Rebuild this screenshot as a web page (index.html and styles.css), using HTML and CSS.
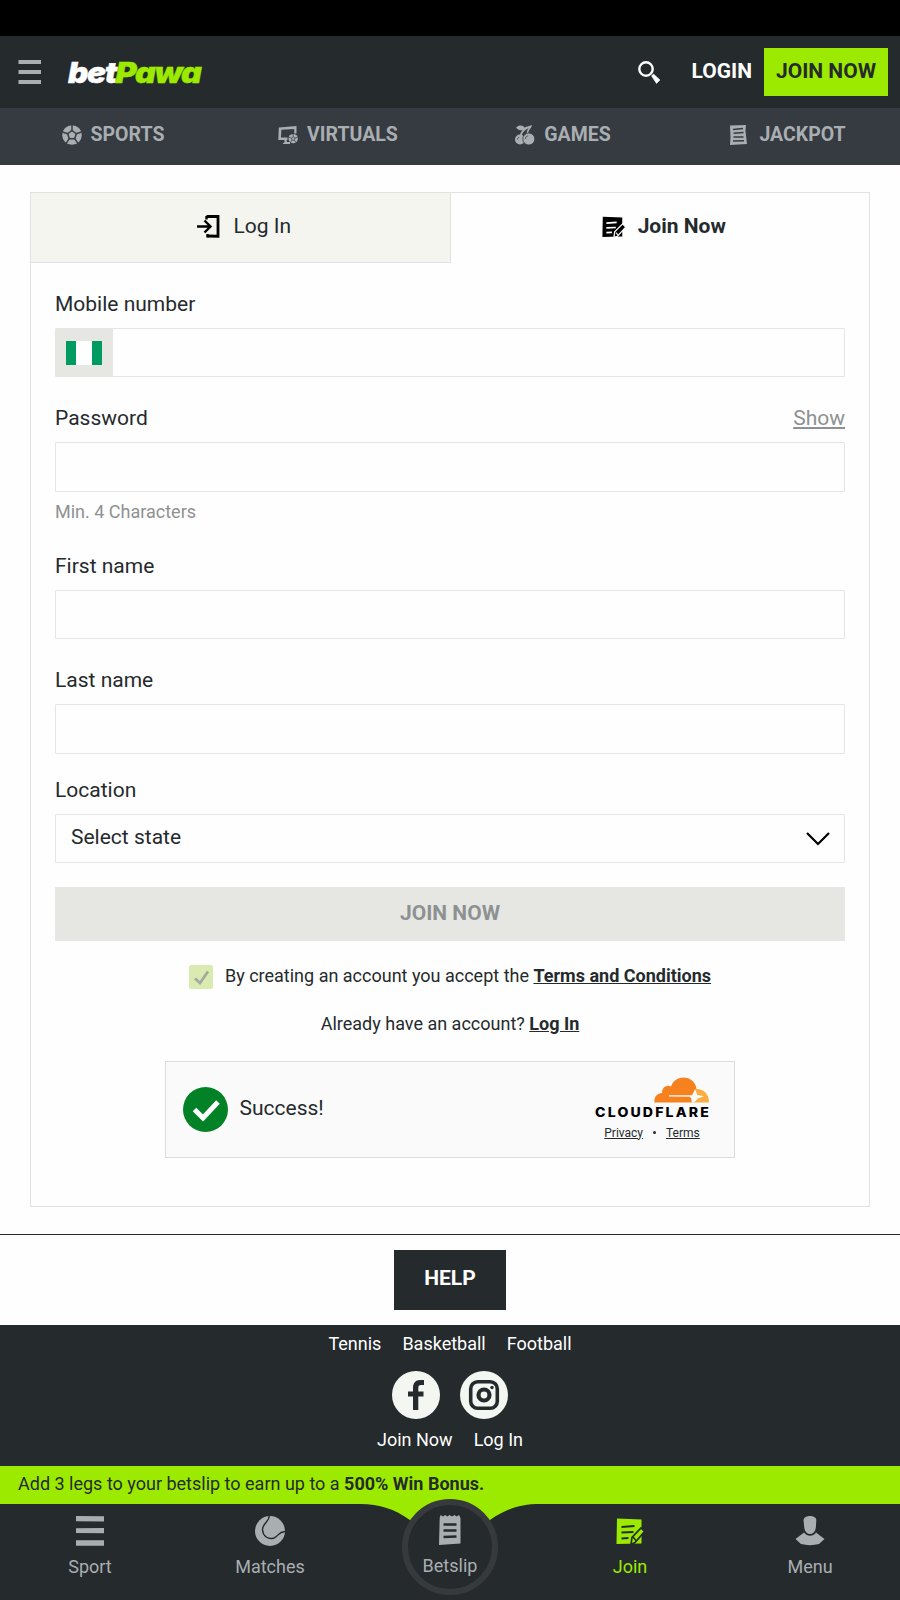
FILE: index.html
```html
<!DOCTYPE html>
<html lang="en">

<head>
	<meta charset="UTF-8">
	<title>betPawa - Join Now</title>
	<link rel="stylesheet" href="styles.css">
</head>

<body>

	<div class="statusBar"></div>

	<header class="header">
		<svg class="hamburger" width="24" height="26" viewBox="0 0 24 26">
			<path d="M.5 1h22.500v4H.5zM.5 11h22.500v4H.5zM.5 21h22.500v4H.5z" fill="#a9aeb1" />
		</svg>
		<svg class="logo" width="140" height="34" viewBox="0 0 140 34">
			<text x="1" y="27.500" textLength="48" lengthAdjust="spacingAndGlyphs" fill="#fff" stroke="#fff">bet</text>
			<text x="48.500" y="27.500" textLength="85" lengthAdjust="spacingAndGlyphs" fill="#9cea00" stroke="#9cea00">Pawa</text>
		</svg>
		<svg class="search" width="24" height="24" viewBox="0 0 24 24">
			<circle cx="9" cy="9" r="6.700" fill="none" stroke="#fff" stroke-width="2.400" />
			<path d="M14.500 16l2-2 6.500 6-3.500 3.500z" fill="#fff" stroke="#fff" stroke-width=".5" />
		</svg>
		<a class="login">LOGIN</a>
		<a class="joinBtn">JOIN NOW</a>
	</header>

	<nav class="mainNav">
		<a>
			<svg width="20" height="20" viewBox="0 0 20 20">
				<circle cx="10" cy="10" r="9.800" fill="#a9aeb1" />
				<path d="M10 5.500l4.300 3.200-1.600 5H7.300l-1.600-5z" fill="none" stroke="#363a41" stroke-width="1.500" />
				<path d="M10 5.500V0M14.300 8.700L19.500 7M12.700 13.700l3 4.500M7.300 13.700l-3 4.500M5.700 8.700L.5 7" fill="none" stroke="#363a41" stroke-width="1.500" />
			</svg>
			<span>SPORTS</span>
		</a>
		<a>
			<svg width="20" height="20" viewBox="0 0 20 20">
				<path d="M.8 2.500L18.500 1v7.500h-2.300V4L3.400 4.800 3 12.500h6.500V15H8.500l.5 2h3v2H4.500l2-2V15H.3z" fill="#a9aeb1" />
				<circle cx="15.200" cy="13.600" r="4.700" fill="#a9aeb1" />
				<path d="M15.200 11.800l1.800 1.300-.7 2h-2.200l-.7-2zM15.200 8.800v3M17 13.100l3-1M16.300 15.100l1.800 2.600M14.100 15.100l-1.800 2.600M13.400 13.100l-3-1" fill="none" stroke="#363a41" stroke-width=".7" />
			</svg>
			<span>VIRTUALS</span>
		</a>
		<a>
			<svg width="20" height="20" viewBox="0 0 20 20">
				<path d="M1 2.500C4-.5 8 0 9.500 2.500L17 0l-.8 2.500C14 5 13 7 13.500 9.500h-1.800c-.3-2.500.5-5 2.300-6.500-3.500 1.500-6.500 4-7.500 7.500H4.700C5.300 8 6.500 6 8 4.700 5.500 6 3 5 1 2.500z" fill="#a9aeb1" />
				<circle cx="5" cy="14.500" r="5" fill="#a9aeb1" />
				<circle cx="13.800" cy="14" r="6" fill="#a9aeb1" stroke="#363a41" stroke-width=".8" />
				<path d="M10.500 14c0-2 1.200-3 2.700-3.200M2.500 14.500c0-1.300.7-2 1.600-2.300" fill="none" stroke="#363a41" stroke-width=".8" />
			</svg>
			<span>GAMES</span>
		</a>
		<a>
			<svg class="jackpotIcon" width="17" height="20" viewBox="0 0 17 20">
				<path d="M0 .5L16 0l-.5 6 1.500 13-17 1 .5-8z" fill="#a9aeb1" />
				<path d="M3 4.500l10-1M3.500 8.300l10-.8M3.500 12h10M3 16l11-.3" fill="none" stroke="#363a41" stroke-width="1.400" />
			</svg>
			<span>JACKPOT</span>
		</a>
	</nav>

	<main class="card">
		<div class="tabs">
			<div class="tab tabLogin">
				<svg width="23" height="23" viewBox="0 0 23 23">
					<path d="M9.500 1.500H21v19.700L10.500 21" fill="none" stroke="#000" stroke-width="2.800" />
					<path d="M9.500 1v3.500M10.500 19v3.500M0 11.500h13M7.500 5.500l6 6-6 6" fill="none" stroke="#000" stroke-width="2.400" />
				</svg>
				<span>Log In</span>
			</div>
			<div class="tab tabJoin">
				<svg width="23" height="23" viewBox="0 0 29 29">
					<path d="M1 1l24.500 1v24L.5 26.500z" />
					<path d="M5.500 9l13-1M5.500 15l12-.5M5.500 21l7-.5" fill="none" stroke="#fff" stroke-width="2.200" />
					<path d="M15 27l1-7L26 10l4 4-10.500 11.500z" stroke="#fff" stroke-width="1.500" />
					<path d="M17.500 21l3 3" stroke="#fff" stroke-width="1.300" />
				</svg>
				<span>Join Now</span>
			</div>
		</div>

		<form class="form">
			<div class="field">
				<label>Mobile number</label>
				<div class="input phone">
					<div class="prefix">
						<div class="flag"></div>
					</div>
				</div>
			</div>
			<div class="field">
				<label>Password <a class="show">Show</a></label>
				<div class="input tall"></div>
				<p class="hint">Min. 4 Characters</p>
			</div>
			<div class="field">
				<label>First name</label>
				<div class="input"></div>
			</div>
			<div class="field lastName">
				<label>Last name</label>
				<div class="input tall"></div>
			</div>
			<div class="field location">
				<label>Location</label>
				<div class="input select">
					<span>Select state</span>
					<svg width="24" height="14" viewBox="0 0 24 14">
						<path d="M1 1l11 11L23 1" fill="none" stroke="#000" stroke-width="2.200" />
					</svg>
				</div>
			</div>
			<div class="submit">JOIN NOW</div>
			<div class="terms">
				<div class="checkbox">
					<svg width="24" height="24" viewBox="0 0 24 24">
						<path d="M6 13.500l5 4.500 8-11.500" fill="none" stroke="#a3aa9f" stroke-width="2.800" />
					</svg>
				</div>
				<p>By creating an account you accept the <a>Terms and Conditions</a></p>
			</div>
			<p class="already">Already have an account? <a>Log In</a></p>

			<div class="captcha">
				<svg class="success" width="45" height="45" viewBox="0 0 45 45">
					<circle cx="22.500" cy="22.500" r="22.500" fill="#038127" />
					<path d="M11.500 22.500l8.500 8.500L35 15" fill="none" stroke="#fff" stroke-width="5" />
				</svg>
				<span class="successText">Success!</span>
				<div class="cloudflare">
					<svg width="116" height="42" viewBox="0 0 116 42">
						<path d="M60.500 25.500c-.8-5 2.200-9.300 7.600-9.500-.5-5 4.400-8.700 9-6.500C81-2.300 98-2.500 102 9.500l1 8-4 8z" fill="#f6821f" />
						<path d="M102 12c7-.5 13 4.500 13 13.500H98z" fill="#fbad41" />
						<path d="M75 18.300h23l3.200-6.300 2 6 7 1.200-6 2-4 4.300h-2.700v-3.500l-1.500-2.200-21-.3z" fill="#fafafa" />
						<text x="1" y="39.500" textLength="116" lengthAdjust="spacingAndGlyphs">CLOUDFLARE</text>
					</svg>
					<div class="legal"><a>Privacy</a><i></i><a>Terms</a></div>
				</div>
			</div>
		</form>
	</main>

	<section class="help">
		<a class="helpBtn">HELP</a>
	</section>

	<footer class="footer">
		<div class="links">
			<a>Tennis</a><a>Basketball</a><a>Football</a>
		</div>
		<div class="social">
			<svg width="48" height="48" viewBox="0 0 48 48">
				<circle cx="24" cy="24" r="24" fill="#f4f6f1" />
				<path d="M21 39V25.500h-5v-5h5V17c0-5 2.500-8 7-8h4v5h-3c-2 0-2.700 1-2.700 3v3.500h5.200v5h-5.200V39z" fill="#252a2d" />
			</svg>
			<svg width="48" height="48" viewBox="0 0 48 48">
				<circle cx="24" cy="24" r="24" fill="#f4f6f1" />
				<rect x="10.700" y="10.700" width="26.600" height="26.600" rx="7" fill="none" stroke="#252a2d" stroke-width="3.600" />
				<circle cx="24" cy="24" r="5.500" fill="none" stroke="#252a2d" stroke-width="4.200" />
				<circle cx="32" cy="16.500" r="1.700" fill="#252a2d" />
			</svg>
		</div>
		<div class="links">
			<a>Join Now</a><a>Log In</a>
		</div>
	</footer>

	<div class="bonus">Add 3 legs to your betslip to earn up to a <b>500% Win Bonus.</b></div>

	<nav class="bottomNav">
		<a>
			<svg width="30" height="32" viewBox="0 0 30 32">
				<path d="M1 1l28 .3v5.200L1 6.200zM1 13.300l28-.3v5.200L1 18zM1 25.300h28v5.400H1z" fill="#a9aeb1" />
			</svg>
			<span>Sport</span>
		</a>
		<a>
			<svg width="30" height="32" viewBox="0 0 30 32">
				<circle cx="15" cy="16" r="15" fill="#a9aeb1" />
				<path d="M14 0c2 6-7 8-6.500 15C8 21 13 25 19 23c5-2 4-6 11-6.500" fill="none" stroke="#252a2d" stroke-width="1.400" />
			</svg>
			<span>Matches</span>
		</a>
		<div class="betslip">
			<svg class="notch" width="180" height="24" viewBox="0 0 180 24">
				<path d="M0 0c20 0 34 5 50 16l40 8 40-8c16-11 30-16 50-16z" fill="#9cea00" />
			</svg>
			<a class="slipCircle">
				<svg width="22" height="30" viewBox="0 0 22 30">
					<path d="M.7 3L1.500 0 4 1.500 6 0l2.500 1.500L10.500 0 13 1.500 15.500 0l2 1.500L20 0l1.500 3v25.500L0 30z" fill="#a9aeb1" />
					<path d="M4.500 9.500h13M4.500 15.500h13M4.500 22l13-.5" fill="none" stroke="#252a2d" stroke-width="2.400" />
				</svg>
				<span>Betslip</span>
			</a>
		</div>
		<a class="active">
			<svg width="28" height="32" viewBox="0 0 28 32">
				<path d="M1 3.500l24.500 1v24L.5 29z" fill="#9cea00" />
				<path d="M5.500 12l13-1M5.500 17.500l12-.5M5.500 23.500l7-.5" fill="none" stroke="#252a2d" stroke-width="2.200" />
				<path d="M15 29.500l1-7L25 13l3.500 3.500-9.500 11z" fill="#9cea00" stroke="#252a2d" stroke-width="1.700" />
				<path d="M17 22l3 3.500" stroke="#252a2d" stroke-width="1.500" />
			</svg>
			<span>Join</span>
		</a>
		<a>
			<svg width="30" height="32" viewBox="0 0 30 32">
				<path d="M8.500 5C9 2 12 1 15 1s6 1 6.300 4l-.5 8c-.7 4-3 6-5.800 6s-5-2-5.700-6z" fill="#a9aeb1" />
				<path d="M.5 24L9 17.500c2 2.500 3.500 3.200 6 3.200s4.500-.7 6-3.200l8.500 6.500-5.500 5c-6 1.500-12 1.500-18 0z" fill="#a9aeb1" />
			</svg>
			<span>Menu</span>
		</a>
	</nav>

</body>

</html>
```
FILE: styles.css
```css
* {
	margin: 0;
	padding: 0;
	box-sizing: border-box;
}

body {
	font-family: Roboto, sans-serif;
	width: 900px;
	height: 1600px;
	overflow: hidden;
	background-color: #fefefe;
	color: #252a2d;
	font-size: 18px;
}

svg {
	display: block;
	flex-shrink: 0;
}

.statusBar {
	height: 36px;
	background-color: #000;
}

.header {
	display: flex;
	align-items: center;
	height: 72px;
	padding: 0 12px 0 18px;
	background-color: #252a2d;
	color: #fff;
	font-size: 21px;
	font-weight: 700;
}

.logo {
	margin-left: 25px;
}

.logo text {
	font-family: Inter, sans-serif;
	font-size: 29px;
	font-style: italic;
	font-weight: 900;
	letter-spacing: -1.2px;
	stroke-width: .4px;
}

.search {
	margin-left: auto;
}

.login {
	margin: 0 12px 2px 31px;
}

.joinBtn {
	width: 124px;
	height: 48px;
	line-height: 46px;
	text-align: center;
	background-color: #9cea00;
	color: #252a2d;
}

.mainNav {
	display: flex;
	height: 57px;
	background-color: #363a41;
	color: #a9aeb1;
	font-size: 19.5px;
	font-weight: 700;
}

.mainNav a {
	display: flex;
	flex: 1;
	align-items: center;
	justify-content: center;
	gap: 9px;
	padding: 0 0 4px 1px;
}

.mainNav span {
	padding-bottom: 1px;
}

.mainNav .jackpotIcon {
	margin-right: 3px;
}

.card {
	width: 840px;
	height: 1015px;
	margin: 27px 30px 0;
	border: 1px solid #e2e2e2;
}

.tabs {
	display: flex;
	height: 70px;
	font-size: 21px;
}

.tab {
	display: flex;
	flex: 1;
	align-items: center;
	justify-content: center;
	gap: 13px;
	padding: 0 0 2px 8px;
}

.tab span {
	padding-bottom: 2px;
}

.tabLogin {
	background-color: #f4f5ef;
	border-right: 1px solid #e2e2e2;
	border-bottom: 1px solid #e2e2e2;
}

.tabJoin {
	font-weight: 700;
}

.form {
	padding: 29px 24px 0;
}

.field {
	margin-bottom: 29px;
}

.field label {
	display: flex;
	justify-content: space-between;
	height: 24px;
	margin-bottom: 12px;
	font-size: 21px;
	line-height: 24px;
}

.input {
	height: 49px;
	border: 1px solid #e5e5e5;
	border-radius: 1px;
}

.input.tall {
	height: 50px;
}

.prefix {
	display: flex;
	align-items: center;
	justify-content: center;
	width: 57px;
	height: 47px;
	padding-right: 2px;
	background-color: #e6e7e3;
}

.flag {
	width: 36px;
	height: 24px;
	border: solid #009a63;
	border-width: 0 10px;
	background-color: #fff;
}

.show {
	color: #8e9192;
	text-decoration: underline;
}

.hint {
	height: 33px;
	padding-top: 9px;
	line-height: 22px;
	color: #8e9192;
}

.field.lastName {
	margin-bottom: 24px;
}

.field.location {
	margin-bottom: 24px;
}

.select {
	display: flex;
	align-items: center;
	justify-content: space-between;
	padding: 0 14px 0 15px;
	font-size: 21px;
}

.select span {
	padding-bottom: 4px;
}

.submit {
	height: 54px;
	line-height: 52px;
	text-align: center;
	font-size: 21px;
	font-weight: 700;
	border-radius: 1px;
	background-color: #e6e7e2;
	color: #8e9192;
}

.terms {
	display: flex;
	justify-content: center;
	gap: 12px;
	height: 24px;
	margin-top: 24px;
	line-height: 22px;
}

.terms a,
.already a {
	font-weight: 700;
	text-decoration: underline;
}

.checkbox {
	width: 24px;
	height: 24px;
	border-radius: 2px;
	background-color: #d9ebb0;
}

.already {
	height: 24px;
	margin-top: 24px;
	line-height: 22px;
	text-align: center;
}

.captcha {
	display: flex;
	align-items: center;
	width: 570px;
	height: 97px;
	margin: 24px auto 0;
	padding: 0 24px 0 17px;
	border: 1px solid #dcdcdc;
	background-color: #fafafa;
}

.successText {
	padding: 0 0 3px 11.5px;
	font-size: 21px;
}

.cloudflare {
	margin-left: auto;
	text-align: center;
}

.cloudflare text {
	font-family: Inter, sans-serif;
	font-size: 13px;
	font-weight: 800;
	letter-spacing: 2px;
	fill: #000;
}

.legal {
	display: flex;
	align-items: center;
	justify-content: center;
	height: 20px;
	margin-top: 4px;
	font-size: 12px;
	text-decoration: underline;
}

.legal i {
	width: 3px;
	height: 3px;
	margin: 0 10px;
	border-radius: 50%;
	background-color: #252a2d;
}

.help {
	height: 91px;
	margin-top: 27px;
	padding-top: 15px;
	border-top: 1px solid #252a2d;
}

.helpBtn {
	display: block;
	width: 112px;
	height: 60px;
	margin: 0 auto;
	line-height: 56px;
	text-align: center;
	font-size: 21px;
	font-weight: 700;
	background-color: #252a2d;
	color: #fff;
}

.footer {
	height: 141px;
	padding-top: 7px;
	background-color: #252a2d;
	color: #fff;
}

.links {
	display: flex;
	justify-content: center;
	gap: 21px;
	height: 24px;
	line-height: 24px;
}

.social {
	display: flex;
	justify-content: center;
	gap: 20px;
	margin: 15px 0 9px;
}

.bonus {
	height: 38px;
	padding-left: 18px;
	line-height: 36px;
	background-color: #9cea00;
}

.bottomNav {
	display: flex;
	height: 96px;
	background-color: #252a2d;
	color: #a9aeb1;
}

.bottomNav > a,
.betslip {
	display: flex;
	flex: 1;
	flex-direction: column;
	align-items: center;
	padding-top: 11px;
}

.bottomNav span {
	margin-top: 9px;
	line-height: 22px;
}

.bottomNav .slipCircle span {
	margin-top: 10px;
}

.bottomNav .active {
	color: #9cea00;
}

/* the circle sits over the bonus bar */
.betslip {
	position: relative;
}

.notch {
	position: absolute;
	top: 0;
	left: 0;
}

.slipCircle {
	position: absolute;
	top: -5px;
	display: flex;
	flex-direction: column;
	align-items: center;
	width: 96px;
	height: 96px;
	padding-top: 10px;
	border: 6px solid #363a3d;
	border-radius: 50%;
	background-color: #252a2d;
}
```
